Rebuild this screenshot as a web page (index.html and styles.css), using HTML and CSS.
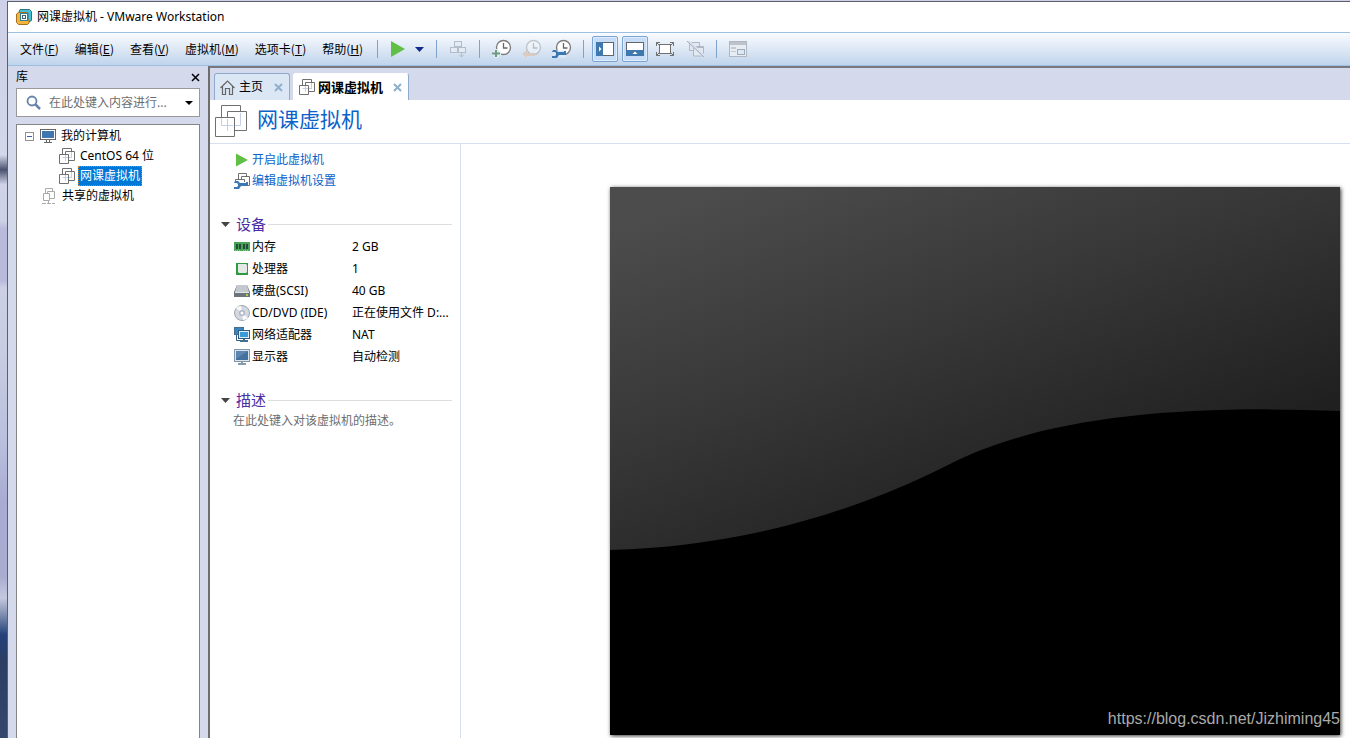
FILE: index.html
```html
<!DOCTYPE html>
<html lang="zh-CN">
<head>
<meta charset="utf-8">
<title>网课虚拟机 - VMware Workstation</title>
<link rel="stylesheet" href="styles.css">
</head>
<body>
<svg class="defs" width="0" height="0" aria-hidden="true">
  <symbol id="vm" viewBox="0 0 16 16">
    <path d="M3.500 9.500H13M6.500 6V13M12.500 4V9.500" fill="none" stroke="#c3cfe6"/>
    <path d="M3.500 6V.5H12.500V3.500M6.500 6V3.500H15.500V12.500H9.500M.5 6.500H9.500V15.500H.5Z" fill="none" stroke="#707070"/>
  </symbol>
  <symbol id="clock" viewBox="0 0 20 20">
    <circle cx="11.500" cy="8.500" r="7" fill="#fff" stroke="#7d7d7d" stroke-width="1.400"/>
    <path d="M11.500 4V9H15.500" fill="none" stroke="#666" stroke-width="1.300"/>
  </symbol>
  <symbol id="wrench" viewBox="0 0 14 8">
    <path d="M1 0H4L6 2H12V1H14V5H7L5 8H0V6H3L4 5V3L3 2H0Z" fill="#3c78b4"/>
  </symbol>
  <symbol id="close" viewBox="0 0 9 9"><path d="M1 1L8 8M8 1L1 8" stroke="currentColor" stroke-width="2"/></symbol>
  <symbol id="down" viewBox="0 0 9 5"><path d="M0 0H9L4.500 5Z" fill="currentColor"/></symbol>
  <symbol id="play" viewBox="0 0 14 16"><path d="M0 0L14 8L0 16Z" fill="#61bf45"/></symbol>
</svg>
<div class="desktop">
  <div class="window">
    <header class="titlebar">
      <svg width="16" height="16" viewBox="0 0 16 16"><path d="M4 .5H13.500L15.500 2.500V11.500L13 13H12V4H3V3Z" fill="#45bdd2" stroke="#2c7388"/><path d="M2.500 3.500H11.500V5H5V11H13V14L11.500 15.500H2.500L.5 13.500V5Z" fill="#f5b33a" stroke="#a8711c"/><rect x="4.500" y="4.500" width="7" height="7" fill="#fff" stroke="#2d7f99"/><rect x="6.500" y="6.500" width="3" height="3" fill="#fff" stroke="#46636c"/></svg>
      <span>网课虚拟机 - VMware Workstation</span>
    </header>
    <div class="toolbar">
      <nav class="menus">
        <button>文件(<u>F</u>)</button><button>编辑(<u>E</u>)</button><button>查看(<u>V</u>)</button><button>虚拟机(<u>M</u>)</button><button>选项卡(<u>T</u>)</button><button>帮助(<u>H</u>)</button>
      </nav>
      <span class="sep"></span>
      <div class="tools power">
        <button aria-label="开启"><svg width="14" height="16"><use href="#play"/></svg></button>
        <button class="caret" aria-label="电源选项"><svg width="9" height="5"><use href="#down"/></svg></button>
      </div>
      <span class="sep"></span>
      <div class="tools">
        <button aria-label="发送按键"><svg width="18" height="18" viewBox="0 0 18 18"><g fill="#e4ebf4" stroke="#b3bcc9"><rect x="5.500" y="1.500" width="7" height="5"/><rect x="1.500" y="7.500" width="7" height="5"/><rect x="9.500" y="7.500" width="7" height="5"/><path d="M12.500 12V17M10 14.500L12.500 17L15 14.500" fill="none"/></g></svg></button>
      </div>
      <span class="sep"></span>
      <div class="tools clocks">
        <button aria-label="拍摄快照"><svg width="20" height="20" viewBox="0 0 20 20"><use href="#clock"/><path d="M4.500 10V19M0 14.500H9" stroke="#e4edf5" stroke-width="4"/><path d="M4 11V18M0 14.500H8" stroke="#6f9c80" stroke-width="2"/></svg></button>
        <button aria-label="恢复快照"><svg width="20" height="20" viewBox="0 0 20 20"><g opacity=".35"><use href="#clock"/></g><path d="M0 15L5 11V14H13V17H5V19Z" fill="#d9cbc0"/></svg></button>
        <button aria-label="管理快照"><svg width="20" height="20" viewBox="0 0 20 20"><use href="#clock"/><path d="M1 15H14" stroke="#dce8f4" stroke-width="7"/><use href="#wrench" x="0" y="11" width="14" height="8"/></svg></button>
      </div>
      <span class="sep"></span>
      <div class="tools toggles">
        <button class="on" aria-label="显示库"><svg width="18" height="14" viewBox="0 0 18 14"><rect x=".5" y=".5" width="17" height="13" fill="#fff" stroke="#666"/><path d="M0 0H7V14H0Z" fill="#3f78ad"/><path d="M3 4.500L5.500 7L3 9.500Z" fill="#fff"/></svg></button>
        <button class="on" aria-label="显示缩略图栏"><svg width="18" height="14" viewBox="0 0 18 14"><rect x=".5" y=".5" width="17" height="13" fill="#fff" stroke="#666"/><path d="M0 8H18V14H0Z" fill="#3f78ad"/><path d="M6.500 12L9 9.500L11.500 12Z" fill="#fff"/></svg></button>
      </div>
      <div class="tools views">
        <button aria-label="全屏"><svg width="18" height="14" viewBox="0 0 18 14"><g fill="none" stroke="#707070"><rect x="3.500" y="2.500" width="11" height="9" fill="#fff"/><path d="M.5 4V.5H4M14 .5H17.500V4M17.500 10V13.500H14M4 13.500H.5V10M.5 .5L3 3M17.500 .5L15 3M.5 13.500L3 11M17.500 13.500L15 11"/></g></svg></button>
        <button aria-label="Unity"><svg width="18" height="16" viewBox="0 0 18 16"><g fill="#e3e9f1" stroke="#afb7c3"><path d="M2.500 1.500H12.500V9.500H2.500Z"/><path d="M6.500 5.500H16.500V15H6.500ZM6 6.500H17"/></g><path d="M1 0L17 15" stroke="#d8e3f0" stroke-width="3"/><path d="M0 0L17 16" stroke="#a2aab6"/></svg></button>
      </div>
      <span class="sep"></span>
      <div class="tools">
        <button aria-label="控制台视图"><svg width="18" height="16" viewBox="0 0 18 16"><rect x=".5" y=".5" width="17" height="15" fill="#e8edf3" stroke="#b0b7c0"/><path d="M1 1H17V4H1Z" fill="#bcc3cb"/><path d="M2 6H7V8H2ZM2 10H7V11H2Z" fill="#c4cbd4"/><rect x="8.500" y="8.500" width="7" height="5" fill="#dce8f5" stroke="#9eabb9"/></svg></button>
      </div>
    </div>
    <div class="workspace">
      <aside class="library">
        <div class="library-head"><h2>库</h2><button aria-label="关闭"><svg width="9" height="9" viewBox="0 0 9 9"><path d="M1 1L8 8M8 1L1 8" stroke="#000" stroke-width="1.500"/></svg></button></div>
        <div class="search">
          <svg width="15" height="15" viewBox="0 0 15 15"><circle cx="6" cy="6" r="4.500" fill="none" stroke="#6583ad" stroke-width="1.800"/><path d="M9 9L14 14" stroke="#6583ad" stroke-width="2.500"/></svg>
          <input type="text" aria-label="搜索" placeholder="在此处键入内容进行...">
          <button aria-label="搜索选项"><svg width="8" height="4" viewBox="0 0 8 4"><path d="M0 0H8L4 4Z"/></svg></button>
        </div>
        <ul class="tree">
          <li class="root"><svg width="9" height="9" viewBox="0 0 9 9"><rect x=".5" y=".5" width="8" height="8" fill="#fff" stroke="#919191"/><path d="M2 4.500H7" stroke="#3d5eaa"/></svg><svg width="16" height="16" viewBox="0 0 16 16"><rect x=".5" y="1.500" width="15" height="10" fill="#fff" stroke="#666"/><path d="M2 3H14V10H2Z" fill="#3f78b0"/><path d="M6.500 12V14.500M9.500 12V14.500M4 14.500H12" stroke="#666"/></svg><span>我的计算机</span></li>
          <li class="child"><svg width="16" height="16"><use href="#vm"/></svg><span>CentOS 64 位</span></li>
          <li class="child"><svg width="16" height="16"><use href="#vm"/></svg><span class="selected">网课虚拟机</span></li>
          <li class="shared"><svg width="16" height="16" viewBox="0 0 16 16"><path d="M4.500 5V.5H11.500V3M6.500 5V3.500H13.500V10.500H9M2.500 5.500H8.500V12.500H2.500ZM1 15.500H5M6 15.500H10M11 15.500H14M7.500 13V15" fill="none" stroke="#aaa"/></svg><span>共享的虚拟机</span></li>
        </ul>
      </aside>
      <main class="main">
        <div class="tabs">
          <div class="tab home"><svg width="15" height="15" viewBox="0 0 15 15"><path d="M.5 8L7.500 1L14.500 8M2.500 6.500V14.500H5.500V8.500H9.500V14.500H12.500V6.500" fill="none" stroke="#666" stroke-width="1.200"/></svg><span>主页</span><button aria-label="关闭主页"><svg width="9" height="9"><use href="#close"/></svg></button></div>
          <div class="tab active"><svg width="16" height="16"><use href="#vm"/></svg><span>网课虚拟机</span><button aria-label="关闭标签"><svg width="9" height="9"><use href="#close"/></svg></button></div>
        </div>
        <div class="vm-head">
          <svg width="32" height="32" viewBox="0 0 32 32"><path d="M6.500 12V20.500H18M12.500 14V26M25.500 8V20.500H20" fill="none" stroke="#c3cfe6"/><path d="M6.500 12V.5H25.500V6M12.500 12V6.500H31.500V25.500H20M.5 12.500H19.500V31.500H.5Z" fill="none" stroke="#707070"/></svg>
          <h1>网课虚拟机</h1>
        </div>
        <div class="content">
          <section class="details">
            <div class="actions">
              <a href="#"><svg width="16" height="14" viewBox="0 0 16 14"><path d="M2 0.500L14 7L2 13.500Z" fill="#61bf45"/></svg>开启此虚拟机</a>
              <a href="#"><svg width="16" height="16" viewBox="0 0 16 16"><g fill="none" stroke="#707070"><path d="M4.500 7V.5H12.500V3M7.500 7V3.500H15.500V12.500H14M1.500 8V6.500H10.500V9"/></g><use href="#wrench" x="0" y="8" width="14" height="8"/></svg>编辑虚拟机设置</a>
            </div>
            <h3><svg width="9" height="5"><use href="#down"/></svg>设备</h3>
            <table class="devices">
              <tr><th scope="row"><div><svg width="16" height="12" viewBox="0 0 16 12"><path d="M0 1H16V10H0Z" fill="#4aa357"/><path d="M2 3H4V8H2ZM5 3H7V8H5ZM9 3H11V8H9ZM12 3H14V8H12Z" fill="#234b38"/><path d="M1 9.500H7M9 9.500H15" stroke="#c6b956" stroke-dasharray="1 1"/></svg>内存</div></th><td>2 GB</td></tr>
              <tr><th scope="row"><div><svg width="16" height="14" viewBox="0 0 16 14"><path d="M2 1H14V13H2Z" fill="#2f9b43"/><path d="M4 2H12L13 3V10L12 11H5L4 10Z" fill="#e4e9e6"/></svg>处理器</div></th><td>1</td></tr>
              <tr><th scope="row"><div><svg width="16" height="14" viewBox="0 0 16 14"><path d="M3 1H13L16 8V13H0V8Z" fill="#6c747e"/><path d="M3 1H13L15 8H1Z" fill="#c3c9cf"/><path d="M1 8.500H15" stroke="#e3e5e8"/><path d="M12 10H14V12H12Z" fill="#a9d33e"/></svg>硬盘(SCSI)</div></th><td>40 GB</td></tr>
              <tr><th scope="row"><div><svg width="16" height="16" viewBox="0 0 16 16"><circle cx="8" cy="8" r="7.500" fill="#d4d8de" stroke="#9da5af"/><path d="M8 8L2 3A8 8 0 0 1 7 1ZM8 8L14 13A8 8 0 0 1 9 15Z" fill="#f9faff"/><circle cx="8" cy="8" r="3" fill="#aeb7c4"/><circle cx="8" cy="8" r="1.500" fill="#fff"/></svg>CD/DVD (IDE)</div></th><td>正在使用文件 D:...</td></tr>
              <tr><th scope="row"><div><svg width="16" height="16" viewBox="0 0 16 16"><rect x=".5" y=".5" width="9" height="7" fill="#3686c2" stroke="#456f91"/><path d="M2.500 8V13.500H6" fill="none" stroke="#315e87"/><rect x="4.500" y="3.500" width="11" height="8" fill="#ddebf4" stroke="#365b7f"/><path d="M6 5H14V10H6Z" fill="#399bd8"/><path d="M10 12V14M6 14H14" stroke="#456f91" stroke-width="2"/></svg>网络适配器</div></th><td>NAT</td></tr>
              <tr><th scope="row"><div><svg width="16" height="16" viewBox="0 0 16 16"><rect x=".5" y=".5" width="15" height="12" fill="#dce4ec" stroke="#8396aa"/><path d="M2 2H14V11H2Z" fill="#45719e"/><path d="M2 2H14L2 10Z" fill="#5d86b0"/><path d="M8 13V15M4 15H12" stroke="#879bac" stroke-width="2"/></svg>显示器</div></th><td>自动检测</td></tr>
            </table>
            <h3><svg width="9" height="5"><use href="#down"/></svg>描述</h3>
            <p>在此处键入对该虚拟机的描述。</p>
          </section>
          <section class="preview">
            <div class="screen">
              <svg viewBox="0 0 730 548">
                <defs><linearGradient id="glow" gradientUnits="userSpaceOnUse" x1="60" y1="20" x2="210" y2="410"><stop offset="0" stop-color="#4c4c4c"/><stop offset=".5" stop-color="#373737"/><stop offset="1" stop-color="#202020"/></linearGradient></defs>
                <path d="M0 0H730V548H0Z" fill="#000"/>
                <path d="M0 0H730V224C560 217 427 232 338 278C235 330 120 360 0 363Z" fill="url(#glow)"/>
              </svg>
              <span class="watermark">https://blog.csdn.net/Jizhiming45</span>
            </div>
          </section>
        </div>
      </main>
    </div>
  </div>
</div>
</body>
</html>
```
FILE: styles.css
```css
* { box-sizing: border-box; }
body {
  margin: 0;
  font: 12px/20px "Noto Sans", "Noto Sans CJK SC", sans-serif;
  color: #000;
}
button {
  display: flex;
  align-items: center;
  justify-content: center;
  padding: 0;
  border: 0;
  background: none;
  font: inherit;
  color: inherit;
}
svg { display: block; flex: none; }
h1, h2, h3, p, ul { margin: 0; padding: 0; font-weight: normal; }
.defs { position: absolute; }
.desktop {
  min-height: 100vh;
  display: flex;
  padding: 1px 0 0 7px;
  background: linear-gradient(#cdd0e6 0, #d3d7ea 21%, #48516e 23%, #d0d3e8 25%, #cdd1e6 30%, #b9b9dc 31%, #b9b9dc 38%, #cdd0e4 39%, #c8cce2 48%, #b9bfdd 60%, #a9abd3 68%, #a9abd0 78%, #c5c8df 81%, #8796b5 83%, #23417a 86%, #2c3e61 90%, #34486d 100%);
}
.window {
  flex: 1;
  min-width: 0;
  display: flex;
  flex-direction: column;
  border: solid #5c5f6c;
  border-width: 1px 0 0 1px;
  background: #d4d9ec;
}
.titlebar {
  display: flex;
  align-items: center;
  gap: 5px;
  height: 30px;
  padding-left: 8px;
  background: #fff;
}
.toolbar {
  display: flex;
  align-items: center;
  height: 34px;
  padding-left: 12px;
  border: solid #9dbfe0;
  border-width: 1px 0;
  background: linear-gradient(#f9fbff, #dbe6f4 55%, #bfd4ec);
}
.menus { display: flex; gap: 16px; font-family: "Noto Sans CJK SC", sans-serif; }
.menus + .sep { margin-left: 14px; }
.sep { width: 1px; height: 18px; background: #7da2cc; }
.tools { display: flex; align-items: center; padding: 0 12px; }
.power { gap: 10px; padding: 0 12px 0 13px; }
.caret { color: #112a8c; }
.clocks { gap: 10px; padding: 0 11px 0 12px; }
.toggles { gap: 4px; padding: 0 0 0 8px; }
.on { width: 26px; height: 26px; border: 1px solid #7ba4d3; border-radius: 2px; background: #c7dcf6; box-shadow: inset 0 0 0 1px #dfecfb; }
.views { gap: 13px; padding: 0 11px 0 8px; }
.workspace { flex: 1; display: flex; }
.library {
  flex: none;
  width: 200px;
  display: flex;
  flex-direction: column;
  padding: 0 8px;
}
.library-head { display: flex; justify-content: space-between; align-items: center; height: 22px; }
.library-head h2 { font-size: 12px; }
.search {
  display: flex;
  align-items: center;
  height: 29px;
  margin-bottom: 7px;
  padding: 0 6px 0 9px;
  border: 1px solid #999;
  background: #fff;
}
.search input {
  flex: 1;
  min-width: 0;
  padding: 0 0 0 8px;
  border: 0;
  outline: 0;
  background: none;
  font: inherit;
}
.search input::placeholder { color: #6d6d6d; opacity: 1; }
.tree { flex: 1; padding-top: 1px; border: 1px solid #858585; border-bottom: 0; background: #fff; list-style: none; }
.tree li { display: flex; align-items: center; gap: 3px; height: 20px; }
.tree span { padding: 0 2px; }
.root { padding-left: 8px; }
.root svg + svg { margin-left: 3px; }
.tree .child { padding-left: 42px; }
.shared { padding-left: 24px; }
.tree .selected { background: #0078d7; color: #fff; outline: 1px dotted #d77f20; outline-offset: -1px; }
.main {
  flex: 1;
  min-width: 0;
  display: flex;
  flex-direction: column;
  border: solid #6e6e6e;
  border-width: 2px 0 0 2px;
  border-top-color: #77797c;
  background: #fff;
}
.tabs { display: flex; align-items: flex-end; gap: 3px; height: 32px; padding-left: 4px; background: #d4d9ec; }
.tab { display: flex; align-items: center; height: 27px; padding: 0 6px 0 5px; border: 1px solid #8fabcb; border-bottom: 0; border-radius: 3px 3px 0 0; background: #dce7f5; }
.tab span { margin: 0 11px 0 4px; }
.tab button { color: #8eb0cd; }
.tab.active { border-left-color: #fff; border-top-color: #fff; background: #fff; font-weight: bold; font-size: 13px; }
.tab.active span { margin: 0 10px 0 3px; }
.vm-head { display: flex; align-items: flex-start; gap: 10px; height: 44px; padding: 5px 0 0 5px; border-bottom: 1px solid #d5e1f1; }
.vm-head h1 { font-size: 21px; line-height: 28px; color: #0b62c9; }
.content { flex: 1; display: flex; align-items: stretch; }
.details { flex: none; width: 251px; padding: 6px 8px 0 11px; border-right: 1px solid #d5e1f1; }
.actions { display: flex; flex-direction: column; align-items: flex-start; gap: 1px; padding-left: 13px; margin-bottom: 22px; }
.actions a { display: flex; align-items: center; gap: 2px; color: #0b62c9; text-decoration: none; }
.details h3 { display: flex; align-items: center; gap: 6px; height: 22px; font-size: 15px; color: #4a2fa5; }
.details h3 svg { color: #444; }
.details h3::after { content: ""; flex: 1; height: 1px; margin-left: -4px; background: #ddd; }
.devices { width: 100%; margin-bottom: 22px; padding: 1px 0 0 13px; border-spacing: 0; table-layout: fixed; }
.devices + h3 { margin-top: -1px; }
.devices th, .devices td { height: 22px; padding: 0; font-weight: normal; text-align: left; white-space: nowrap; }
.devices th { width: 118px; }
.devices th div { display: flex; align-items: center; gap: 2px; }
.details p { padding-left: 12px; line-height: 20px; color: #6d6d6d; }
.preview { flex: 1; min-width: 0; padding: 43px 10px 3px 149px; }
.screen { position: relative; box-shadow: 1px 1px 4px #333; }
.screen > svg { width: 100%; height: auto; }
.watermark { position: absolute; right: 0; bottom: 6px; font: 16px/20px "Liberation Sans", Arial, sans-serif; color: #aaa; }
```
